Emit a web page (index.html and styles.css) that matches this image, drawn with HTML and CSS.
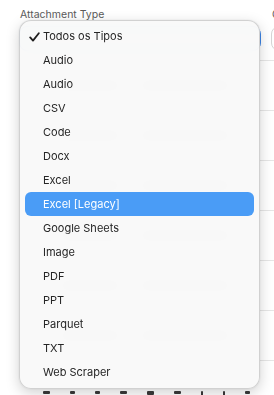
FILE: index.html
```html
<!DOCTYPE html>
<html>
<head>
<meta charset="utf-8">
<link rel="stylesheet" href="styles.css">
</head>
<body>
<div class="page">
  <div class="filters">
    <div class="field main">
      <div class="label">Attachment Type</div>
      <div class="select focused"></div>
    </div>
    <div class="field side">
      <div class="label">C</div>
      <div class="select"></div>
    </div>
  </div>
  <div class="table">
    <div class="row"><span class="cell w1"></span><span class="cell w2"></span></div>
    <div class="row"><span class="cell w1"></span><span class="cell w2"></span></div>
    <div class="row"><span class="cell w1"></span><span class="cell w2"></span></div>
    <div class="row"><span class="cell w1"></span><span class="cell w2"></span></div>
    <div class="row"><span class="cell w1"></span><span class="cell w2"></span></div>
    <div class="row"><span class="cell w1"></span><span class="cell w2"></span></div>
    <div class="row last">
      <div class="peek">
        <span class="mark"></span><span class="mark s"></span><span class="mark s"></span><span class="mark"></span><span class="mark g"></span><span class="mark"></span><span class="mark p"></span><span class="mark p"></span><span class="mark s"></span>
      </div>
    </div>
  </div>

  <ul class="menu">
    <li class="item checked"><svg class="check" width="11" height="10" viewBox="0 0 11 10"><path d="M1.2 5.4 L4 8.6 L9.8 1.2" fill="none" stroke="#1f1f1f" stroke-width="1.8" stroke-linecap="round" stroke-linejoin="round"/></svg>Todos os Tipos</li>
    <li class="item">Audio</li>
    <li class="item">Audio</li>
    <li class="item">CSV</li>
    <li class="item">Code</li>
    <li class="item">Docx</li>
    <li class="item">Excel</li>
    <li class="item active">Excel [Legacy]</li>
    <li class="item">Google Sheets</li>
    <li class="item">Image</li>
    <li class="item">PDF</li>
    <li class="item">PPT</li>
    <li class="item">Parquet</li>
    <li class="item">TXT</li>
    <li class="item">Web Scraper</li>
  </ul>
</div>
</body>
</html>
```

FILE: styles.css
```css
* { box-sizing: border-box; }
html, body { margin: 0; padding: 0; background: #ffffff; }
body {
  font-family: Inter, "Noto Sans", "Liberation Sans", sans-serif;
  width: 274px;
  height: 395px;
  overflow: hidden;
}
.page {
  position: relative;
  height: 395px;
  overflow: hidden;
}
.filters {
  display: flex;
  gap: 10px;
  padding: 8px 0 0 19px;
}
.field.main { width: 242px; flex: none; }
.field.side { width: 60px; flex: none; }
.label {
  font-size: 10.5px;
  color: #5a5a5a;
  line-height: 14px;
  padding-left: 1px;
}
.select {
  margin-top: 4px;
  height: 25px;
  border: 1px solid #d5d5d5;
  border-radius: 8px;
  background: #fff;
}
.select.focused {
  border: 1.5px solid #3e86e8;
  background: #f4f8fe;
}
.table {
  margin-top: 9px;
  padding-left: 20px;
}
.row {
  height: 50px;
  border-top: 1px solid #e6e6e6;
  display: flex;
  align-items: center;
  gap: 20px;
  padding-left: 40px;
}
.cell { display: block; height: 9px; background: #d8d8d8; border-radius: 2px; }
.w1 { width: 60px; }
.w2 { width: 90px; }
.row.last { align-items: flex-start; padding-top: 30px; padding-left: 23px; }
.peek { display: flex; gap: 20px; align-items: flex-start; }
.mark { display: block; width: 7px; height: 3px; background: #3a3a3a; border-radius: 1px; }
.mark.s { width: 5px; }
.mark.g { width: 7px; height: 4px; }
.mark.p { width: 2px; height: 5px; }

.menu {
  position: absolute;
  left: 19px;
  top: 20px;
  width: 241px;
  height: 369px;
  margin: 0;
  padding: 3px 5px;
  list-style: none;
  background: rgba(249, 249, 249, 0.94);
  backdrop-filter: blur(6px);
  border: 1px solid rgba(0, 0, 0, 0.16);
  border-radius: 12px;
  box-shadow: 0 4px 14px rgba(0, 0, 0, 0.18), 0 0 2px rgba(0, 0, 0, 0.1);
}
.item {
  position: relative;
  height: 24px;
  line-height: 24px;
  padding-left: 18px;
  font-size: 11px;
  color: #262626;
  border-radius: 6px;
  white-space: nowrap;
}
.item.active {
  background: #4a9cf6;
  color: #ffffff;
}
.check {
  position: absolute;
  left: 4px;
  top: 8px;
}
```
